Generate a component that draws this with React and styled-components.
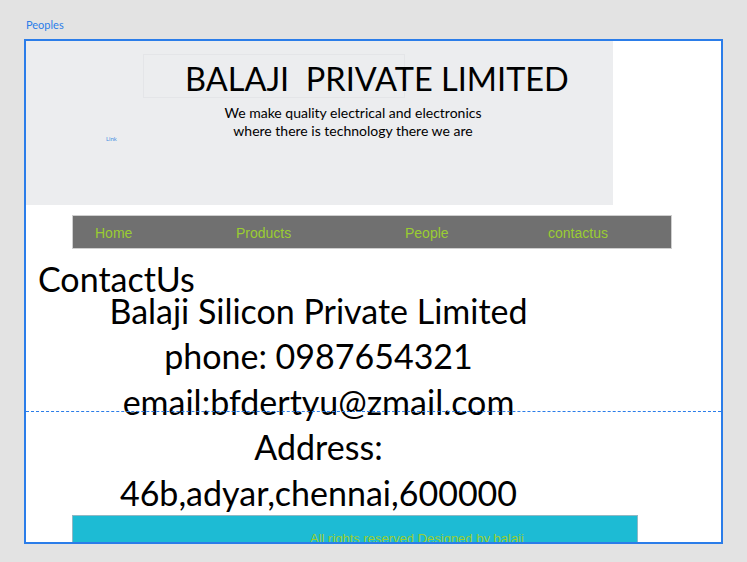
import React from "react";
import styled, { createGlobalStyle } from "styled-components";

const Global = createGlobalStyle`
  html, body { margin: 0; padding: 0; background: #e3e3e3; }
  body {
    width: 747px;
    height: 562px;
    overflow: hidden;
    font-family: "Lato", "Open Sans", sans-serif;
    color: #000;
  }
`;

const Page = styled.div`
  padding: 17px 0 0 24px;
`;

const Caption = styled.div`
  height: 22px;
  padding-left: 2px;
  font-size: 11px;
  line-height: 16px;
  color: #2b7de9;
`;

const Frame = styled.div`
  position: relative;
  width: 695px;
  height: 501px;
  border: 2px solid #2b7de9;
  background: #fff;
  overflow: hidden;
`;

const Guide = styled.div`
  position: absolute;
  left: 0;
  right: 0;
  top: 370px;
  border-top: 1px dashed #2b7de9;
`;

const Header = styled.header`
  width: 587px;
  height: 164px;
  background: #ecedef;
  padding-top: 13px;
  box-sizing: border-box;
`;

const TitleBox = styled.div`
  margin-left: 117px;
  width: 262px;
  height: 44px;
  box-sizing: border-box;
  border: 1px solid #e4e5e8;
`;

const Title = styled.h1`
  margin: 0;
  padding-left: 41px;
  font-size: 32.5px;
  font-weight: 400;
  line-height: 48px;
  height: 42px;
  white-space: pre;
`;

const TagRow = styled.div`
  display: flex;
  align-items: flex-start;
  margin-top: 6px;
  padding-left: 80px;
`;

const SmallLink = styled.a`
  width: 97px;
  padding-top: 31px;
  font-size: 6px;
  line-height: 8px;
  color: #4a90e2;
  text-decoration: none;
`;

const Tagline = styled.p`
  margin: 0;
  width: 300px;
  text-align: center;
  font-size: 14px;
  line-height: 18px;
`;

const Nav = styled.nav`
  display: grid;
  grid-template-columns: 141px 169px 143px auto;
  align-items: center;
  margin: 10px 0 0 46px;
  width: 600px;
  height: 34px;
  box-sizing: border-box;
  padding: 1px 0 0 22px;
  background: #707070;
  border: 1px solid #cfcfcf;
`;

const NavItem = styled.a`
  font-family: "Liberation Sans", Arial, sans-serif;
  font-size: 14px;
  color: #9acd32;
  text-decoration: none;
`;

const Heading = styled.h2`
  margin: 20.5px 0 0 12px;
  font-size: 34px;
  font-weight: 400;
  line-height: 18px;
`;

const Contact = styled.div`
  width: 585px;
  text-align: center;
  font-size: 34px;
  line-height: 45.5px;
`;

const Footer = styled.footer`
  margin-left: 46px;
  width: 566px;
  height: 60px;
  box-sizing: border-box;
  padding: 15px 0 0 237px;
  background: #1dbbd4;
  border: 1px solid #8fb8c4;
  font-family: "Liberation Sans", Arial, sans-serif;
  font-size: 13px;
  color: #9acd32;
`;

const navItems = ["Home", "Products", "People", "contactus"];
const contactLines = [
  "Balaji Silicon Private Limited",
  "phone: 0987654321",
  "email:bfdertyu@zmail.com",
  "Address:",
  "46b,adyar,chennai,600000",
];

export default function App() {
  return (
    <>
      <Global />
      <Page>
        <Caption>Peoples</Caption>
        <Frame>
          <Header>
            <TitleBox>
              <Title>{"BALAJI  PRIVATE LIMITED"}</Title>
            </TitleBox>
            <TagRow>
              <SmallLink href="#">Link</SmallLink>
              <Tagline>
                We make quality electrical and electronics
                <br />
                where there is technology there we are
              </Tagline>
            </TagRow>
          </Header>
          <Nav>
            {navItems.map((n) => (
              <NavItem key={n} href="#">
                {n}
              </NavItem>
            ))}
          </Nav>
          <Heading>ContactUs</Heading>
          <Contact>
            {contactLines.map((l) => (
              <div key={l}>{l}</div>
            ))}
          </Contact>
          <Footer>All rights reserved Designed by balaji</Footer>
          <Guide />
        </Frame>
      </Page>
    </>
  );
}
